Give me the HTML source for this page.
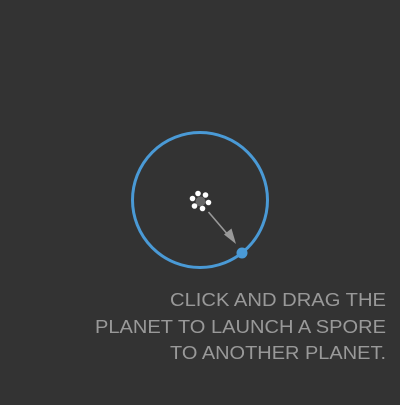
<!DOCTYPE html>
<html><head><style>
html,body{margin:0;padding:0;background:#333333;}
</style></head><body>
<svg width="400" height="400" viewBox="0 0 400 400" xmlns="http://www.w3.org/2000/svg">
<rect width="400" height="400" fill="#333333"/>
<circle cx="200" cy="200" r="67.5" fill="none" stroke="#4a9ad6" stroke-width="3"/>
<circle cx="200.5" cy="201.5" r="5" fill="#666"/>
<g fill="#fff">
<circle cx="198" cy="193.5" r="2.8"/>
<circle cx="205.5" cy="195" r="2.8"/>
<circle cx="208.5" cy="202.5" r="2.8"/>
<circle cx="202.5" cy="208.5" r="2.8"/>
<circle cx="194.5" cy="206" r="2.8"/>
<circle cx="192.5" cy="198.5" r="2.8"/>
</g>
<line x1="208.5" y1="212" x2="229" y2="236" stroke="#999" stroke-width="1.6"/>
<polygon points="236,244 224,234.5 231.5,228.5" fill="#999"/>
<circle cx="242" cy="253" r="5.5" fill="#4a9ad6"/>
<g fill="#999" font-family="Liberation Sans, sans-serif" font-size="18.5" text-anchor="end">
<text x="386" y="306" textLength="216" lengthAdjust="spacingAndGlyphs">CLICK AND DRAG THE</text>
<text x="386" y="333" textLength="291" lengthAdjust="spacingAndGlyphs">PLANET TO LAUNCH A SPORE</text>
<text x="386" y="359" textLength="216" lengthAdjust="spacingAndGlyphs">TO ANOTHER PLANET.</text>
</g>
</svg>
</body></html>
